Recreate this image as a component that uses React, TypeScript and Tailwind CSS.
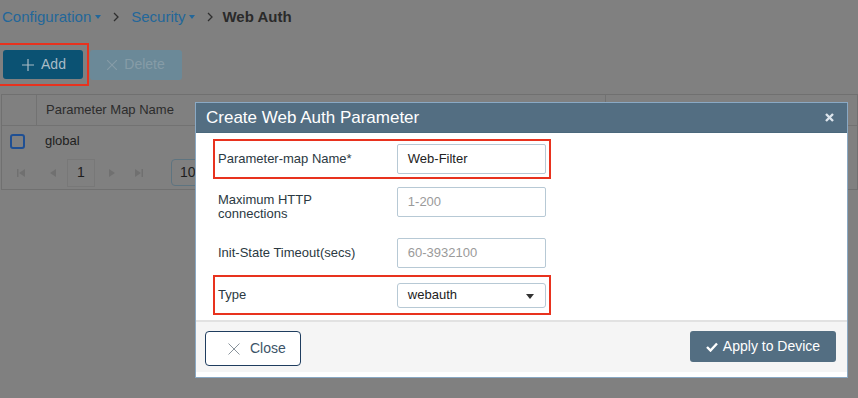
import React from "react";

const font = { fontFamily: '"Liberation Sans", Arial, sans-serif' };

function Caret() {
  return <span className="ml-[4px] inline-block h-0 w-0 border-x-[3px] border-t-[4px] border-x-transparent border-t-[#23679a] align-middle" />;
}

function Chevron({ right = 11 }: { right?: number }) {
  return (
    <svg width="8" height="10" viewBox="0 0 8 10" className={right === 11 ? "mx-[11px]" : "ml-[11px] mr-[8px]"}>
      <path d="M2 1l4 4-4 4" fill="none" stroke="#2f2f2f" strokeWidth="1.3" />
    </svg>
  );
}

function PageIcon({ d }: { d: string }) {
  return (
    <svg width="10" height="10" viewBox="0 0 10 10">
      <path d={d} fill="#707070" />
    </svg>
  );
}

function FormRow({
  label,
  red,
  className,
  labelClass = "",
  children,
}: {
  label: React.ReactNode;
  red?: boolean;
  className: string;
  labelClass?: string;
  children: React.ReactNode;
}) {
  return (
    <div
      className={`ml-[17px] flex h-[40px] w-[338px] items-center border-2 px-[3px] ${
        red ? "border-[#e8321e]" : "border-transparent"
      } ${className}`}
    >
      <div className={`w-[180px] text-[13px] leading-[14px] text-[#2b3942] ${labelClass}`}>{label}</div>
      {children}
    </div>
  );
}

function TextInput({ value, placeholder, h }: { value?: string; placeholder?: string; h: string }) {
  return (
    <div className={`flex w-[150px] items-center rounded-[2px] border border-[#b7c9d5] px-[10px] text-[13px] ${h}`}>
      {value ? <span className="text-[#222]">{value}</span> : <span className="text-[#9a9a9a]">{placeholder}</span>}
    </div>
  );
}

export default function App() {
  return (
    <div className="relative h-[398px] w-[858px] overflow-hidden bg-[#808080]" style={font}>
      {/* Breadcrumb */}
      <div className="flex h-[34px] items-center pl-[2px] text-[15px]">
        <span className="text-[#23679a]">Configuration</span>
        <Caret />
        <Chevron />
        <span className="text-[#23679a]">Security</span>
        <Caret />
        <Chevron right={8} />
        <span className="font-bold text-[#2a2a2a]">Web Auth</span>
      </div>

      {/* Toolbar */}
      <div className="mt-[9px] flex items-center">
        <div className="-ml-[3px] flex h-[43px] w-[92px] items-center border-2 border-[#e8321e] pl-[4px]">
          <div className="flex h-[29px] w-[80px] items-center justify-center gap-[7px] rounded-[3px] bg-[#0b5273] pl-[2px] text-[14px] text-[#a9bcc6]">
            <svg width="12" height="12" viewBox="0 0 12 12">
              <path d="M6 0v12M0 6h12" stroke="#a9bcc6" strokeWidth="1.2" />
            </svg>
            Add
          </div>
        </div>
        <div className="ml-[1px] flex h-[30px] w-[92px] items-center justify-center gap-[7px] rounded-[3px] bg-[#6b8998] text-[14px] text-[#869ca7]">
          <svg width="10" height="10" viewBox="0 0 10 10">
            <path d="M0 0l10 10M10 0L0 10" stroke="#869ca7" strokeWidth="1.1" />
          </svg>
          Delete
        </div>
      </div>

      {/* Table */}
      <div className="ml-[1px] mt-[8px] border border-[#707070]">
        <div className="flex h-[31px] border-b border-[#727272] text-[13px] text-[#2c2c2c]">
          <div className="w-[35px] border-r border-[#727272]" />
          <div className="flex w-[569px] items-center border-r border-[#727272] pl-[9px]">Parameter Map Name</div>
          <div className="flex-1" />
        </div>
        <div className="flex h-[30px] items-center text-[13px] text-[#1e1e1e]">
          <div className="ml-[8px] h-[15px] w-[15px] rounded-[3px] border-2 border-[#1f4f93]" />
          <span className="ml-[20px]">global</span>
        </div>
        <div className="flex h-[33px] items-center">
          <div className="ml-[14px]">
            <PageIcon d="M1 1h1.5v8H1zM9 1v8L3 5z" />
          </div>
          <div className="ml-[22px]">
            <PageIcon d="M8 1v8L2 5z" />
          </div>
          <div className="ml-[9px] flex h-[28px] w-[28px] items-center justify-center border border-[#787878] text-[14px] text-[#1e1e1e]">
            1
          </div>
          <div className="ml-[12px]">
            <PageIcon d="M2 1v8l6-4z" />
          </div>
          <div className="ml-[17px]">
            <PageIcon d="M1 1v8l6-4zM7.5 1H9v8H7.5z" />
          </div>
          <div className="ml-[27px] flex h-[27px] w-[60px] items-center rounded-[4px] border border-[#5e7480] pl-[8px] text-[14px] text-[#1e1e1e]">
            10
          </div>
        </div>
      </div>

      {/* Modal */}
      <div className="absolute left-[195px] top-[102px] w-[653px] border border-[#8aa9c4] bg-white pb-[5px]">
        <div className="flex h-[30px] items-center justify-between border-b border-[#4a687c] bg-[#536e82] pl-[10px] pr-[13px]">
          <span className="text-[17px] text-white">Create Web Auth Parameter</span>
          <svg width="9" height="9" viewBox="0 0 9 9">
            <path d="M1 1l7 7M8 1L1 8" stroke="#dde5ec" strokeWidth="2.4" />
          </svg>
        </div>

        <div className="flex flex-col pb-[5px]">
          <FormRow label="Parameter-map Name*" red className="mt-[6px]">
            <TextInput value="Web-Filter" h="h-[30px]" />
          </FormRow>
          <FormRow
            label={
              <>
                Maximum HTTP
                <br />
                connections
              </>
            }
            labelClass="pt-[10px]"
            className="mt-[3px]"
          >
            <TextInput placeholder="1-200" h="h-[30px]" />
          </FormRow>
          <FormRow label="Init-State Timeout(secs)" className="mt-[11px]">
            <TextInput placeholder="60-3932100" h="h-[30px]" />
          </FormRow>
          <FormRow label="Type" red className="mt-[2px]">
            <div className="flex h-[25px] w-[150px] items-center justify-between rounded-[3px] border border-[#b7c9d5] pl-[10px] pr-[11px] text-[13px] text-[#222]">
              webauth
              <span className="mt-[3px] h-0 w-0 border-x-[4px] border-t-[5px] border-x-transparent border-t-[#333]" />
            </div>
          </FormRow>
        </div>

        <div className="flex h-[52px] items-start justify-between border-t-2 border-[#e2e2e2] bg-[#f5f5f5] px-[9px] pt-[9px]">
          <div className="flex h-[35px] w-[96px] items-center gap-[10px] rounded-[4px] border border-[#1f3d5f] bg-white pl-[22px] text-[14px] text-[#3c5468]">
            <svg width="12" height="12" viewBox="0 0 12 12">
              <path d="M0.5 0.5l11 11M11.5 0.5l-11 11" stroke="#8a949c" strokeWidth="1" />
            </svg>
            Close
          </div>
          <div className="mr-[2px] flex h-[31px] w-[146px] items-center justify-center gap-[5px] rounded-[3px] bg-[#536e82] text-[14px] text-white">
            <svg width="12" height="10" viewBox="0 0 12 10">
              <path d="M1 5l3.5 3.5L11 1.5" fill="none" stroke="#fff" strokeWidth="2.4" />
            </svg>
            Apply to Device
          </div>
        </div>
      </div>
    </div>
  );
}
